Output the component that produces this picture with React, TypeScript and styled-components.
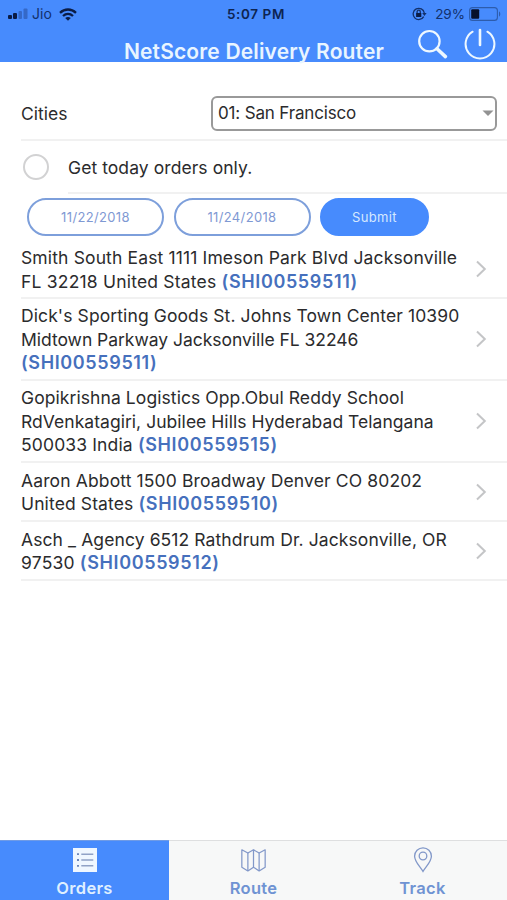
import React from "react";
import styled, { createGlobalStyle } from "styled-components";

const Global = createGlobalStyle`
  * { box-sizing: border-box; }
  body { margin: 0; background: #fff; font-family: Inter, "Liberation Sans", sans-serif; color: #2b2b2d; }
`;

const Screen = styled.div`
  width: 507px;
  height: 900px;
  display: flex;
  flex-direction: column;
  overflow: hidden;
  background: #fff;
`;

const Header = styled.header`
  height: 62px;
  flex: none;
  background: #478bfd;
  display: flex;
  flex-direction: column;
`;

const StatusBar = styled.div`
  height: 28px;
  flex: none;
  display: grid;
  grid-template-columns: 1fr auto 1fr;
  align-items: center;
  padding: 0 6px 0 8px;
  color: #12306b;
`;

const StatusSide = styled.div<{ $end?: boolean }>`
  display: flex;
  align-items: center;
  justify-content: ${(p) => (p.$end ? "flex-end" : "flex-start")};
  svg { display: block; flex: none; }
`;

const Carrier = styled.span`
  font-size: 14px;
  line-height: 16px;
  margin: 0 7px 0 4px;
`;

const Clock = styled.span`
  font-size: 13.5px;
  line-height: 16px;
  font-weight: 600;
  letter-spacing: 0.6px;
  margin-left: 3px;
  color: #0d2452;
`;

const Percent = styled.span`
  font-size: 13.5px;
  line-height: 16px;
  margin: 0 4px 0 8px;
`;

const NavBar = styled.div`
  height: 34px;
  flex: none;
  display: grid;
  grid-template-columns: 90px 1fr 90px;
`;

const Title = styled.h1`
  grid-column: 2;
  margin: 0;
  padding: 12px 0 0 1px;
  text-align: center;
  white-space: nowrap;
  font-size: 21px;
  line-height: 24px;
  font-weight: 600;
  letter-spacing: 0.16px;
  color: #e9f5ff;
`;

const NavActions = styled.div`
  display: flex;
  gap: 16.5px;
  align-items: flex-start;
  padding-left: 0.5px;
  svg { display: block; flex: none; }
`;

const CityRow = styled.div`
  margin: 33px 0 0 21px;
  height: 46px;
  flex: none;
  display: flex;
  justify-content: space-between;
  padding-right: 10px;
  border-bottom: 2px solid #f1f1f1;
`;

const Label = styled.span<{ $size?: number; $spacing?: number }>`
  font-size: ${(p) => p.$size ?? 17.5}px;
  line-height: 37px;
  letter-spacing: ${(p) => p.$spacing ?? 0}px;
`;

const CitySelect = styled.div`
  width: 286px;
  height: 35px;
  margin-top: 1px;
  border: 2px solid #999;
  border-radius: 6px;
  display: flex;
  align-items: center;
  justify-content: space-between;
  padding: 0 1px 0 5px;
`;

const TodayRow = styled.div`
  height: 53px;
  flex: none;
  display: flex;
  padding-left: 23px;
  gap: 19px;
`;

const Radio = styled.span`
  width: 26px;
  height: 26px;
  margin-top: 13px;
  border: 2px solid #d2d2d3;
  border-radius: 50%;
`;

const TodayLabel = styled.div`
  flex: 1;
  padding-top: 8px;
  border-bottom: 2px solid #f1f1f1;
`;

const Filters = styled.div`
  height: 47px;
  flex: none;
  display: flex;
  gap: 9.5px;
  padding: 4px 0 0 27px;
`;

const Pill = styled.button<{ $primary?: boolean }>`
  width: ${(p) => (p.$primary ? 109 : 137)}px;
  height: 38px;
  padding: 0;
  border: 2px solid ${(p) => (p.$primary ? "#478bfd" : "#7d9fdb")};
  border-radius: 19px;
  background: ${(p) => (p.$primary ? "#478bfd" : "#fff")};
  color: ${(p) => (p.$primary ? "#d5e8ff" : "#7f99d3")};
  font-family: inherit;
  font-size: 13px;
  letter-spacing: 0.35px;
`;

const OrderList = styled.ul`
  flex: 1;
  margin: 0;
  padding: 0 0 0 21px;
  list-style: none;
`;

const OrderRow = styled.li<{ $height: number }>`
  height: ${(p) => p.$height}px;
  border-bottom: 2px solid #f1f1f1;
  display: flex;
  align-items: center;
  justify-content: space-between;
  padding-right: 20px;
  svg { display: block; flex: none; }
`;

const Address = styled.div`
  padding-top: 1px;
  font-size: 17.5px;
  line-height: 23.4px;
`;

const Line = styled.div<{ $spacing: number }>`
  white-space: nowrap;
  letter-spacing: ${(p) => p.$spacing}px;
`;

const OrderId = styled.span`
  font-size: 18px;
  font-weight: 600;
  letter-spacing: 0.63px;
  color: #4670bd;
`;

const TabBar = styled.nav`
  height: 60px;
  flex: none;
  display: grid;
  grid-template-columns: repeat(3, 1fr);
  background: #f7f8f8;
`;

const Tab = styled.div<{ $active?: boolean }>`
  display: flex;
  flex-direction: column;
  align-items: center;
  padding-top: 7px;
  border-top: 1px solid ${(p) => (p.$active ? "#6f9be6" : "#dedfe0")};
  background: ${(p) => (p.$active ? "#478bfd" : "transparent")};
  color: ${(p) => (p.$active ? "#dfefff" : "#6f93d3")};
  svg { display: block; }
`;

const TabLabel = styled.span`
  margin-top: 6px;
  font-size: 16.5px;
  line-height: 20px;
  font-weight: 600;
  letter-spacing: 0.3px;
`;

const Signal = () => (
  <svg width="20" height="12" viewBox="0 0 20 12">
    <rect x="0" y="7" width="4" height="4" rx="1" fill="#0b1c45" />
    <rect x="5" y="5" width="4" height="6" rx="1" fill="#0b1c45" />
    <rect x="10.5" y="3" width="3.5" height="8" rx="1" fill="#3569c7" />
    <rect x="15.5" y="0.5" width="4" height="10.5" rx="1" fill="#3569c7" />
  </svg>
);

const Wifi = () => (
  <svg width="18" height="13" viewBox="0 0 18 13" fill="none" stroke="#0b1c45" strokeWidth="2.3">
    <path d="M1 4.8C5.6.4 12.4.4 17 4.8" />
    <path d="M4 8c3-2.7 7-2.7 10 0" />
    <path d="M6.2 10.1c1.7-1.5 3.9-1.5 5.6 0L9 12.7z" fill="#0b1c45" stroke="none" />
  </svg>
);

const RotationLock = () => (
  <svg width="15" height="14" viewBox="0 0 15 14" fill="none" stroke="#12306b" strokeWidth="1.3">
    <path d="M11.7 9.6A5.6 5.6 0 1 1 12.3 6" />
    <path d="M10.2 6h4.4l-2.2 3z" fill="#12306b" stroke="none" />
    <rect x="4.1" y="6" width="5.2" height="4" fill="#0b1c45" stroke="none" />
    <path d="M5.1 6V4.8a1.6 1.6 0 0 1 3.2 0V6" />
  </svg>
);

const Battery = () => (
  <svg width="32" height="14" viewBox="0 0 32 14">
    <rect x="0.6" y="0.6" width="27.8" height="12.8" rx="3" fill="none" stroke="#2d5cac" strokeWidth="1.1" />
    <path d="M30 4.5c1.7.5 1.7 4.5 0 5z" fill="#2d5cac" />
    <rect x="2.2" y="2.2" width="8" height="9.6" rx="1" fill="#07112b" />
  </svg>
);

const Search = () => (
  <svg width="30" height="31" viewBox="0 0 30 31" fill="none" stroke="#eef8ff">
    <circle cx="11.4" cy="13.2" r="10.2" strokeWidth="2.2" />
    <path d="M19 20.8l8.4 7.8" strokeWidth="3.5" strokeLinecap="round" />
  </svg>
);

const Power = () => (
  <svg width="32" height="33" viewBox="0 0 32 33" fill="none" stroke="#eef8ff" strokeWidth="2" strokeLinecap="round">
    <path d="M8.6 3.7A14.4 14.4 0 1 0 23.4 3.7" />
    <path d="M16 2v15" strokeWidth="2.6" />
  </svg>
);

const Caret = () => (
  <svg width="12" height="7" viewBox="0 0 12 7">
    <path d="M.5.5h11L6 6z" fill="#929292" />
  </svg>
);

const Chevron = () => (
  <svg width="12" height="18" viewBox="0 0 12 18" fill="none" stroke="#c4c5c7" strokeWidth="2">
    <path d="M2 1.5L9.8 9 2 16.5" />
  </svg>
);

const ListIcon = () => (
  <svg width="24" height="24" viewBox="0 0 24 24" fill="none">
    <rect width="24" height="24" fill="#eff7ff" />
    <path d="M4 6.2h2M4 12h2M4 17.8h2" stroke="#6c87bb" strokeWidth="1.8" />
    <path d="M8.3 6.2h12M8.3 12h12M8.3 17.8h12" stroke="#90a2c6" strokeWidth="1.6" />
  </svg>
);

const MapIcon = () => (
  <svg width="25" height="24" viewBox="0 0 24 24" preserveAspectRatio="none" fill="none" stroke="#8298c9" strokeWidth="1.2" strokeLinejoin="round">
    <path d="M.8 1.8L6.6 5 12 1.8 17.4 5 23.2 1.8V19.2L17.4 23 12 19.2 6.6 23 .8 19.2z" />
    <path d="M6.6 5v18M12 1.8v17.4M17.4 5v18" />
  </svg>
);

const PinIcon = () => (
  <svg width="20" height="24" viewBox="0 0 20 24" overflow="visible" fill="none" stroke="#8298c9" strokeWidth="1.3">
    <path d="M10 23.4C7 18.4 1.6 13.6 1.6 8.2a8.4 8.4 0 0 1 16.8 0c0 5.4-5.4 10.2-8.4 15.2z" />
    <circle cx="10" cy="8" r="3.8" />
  </svg>
);

type TextLine = { text: string; id?: string; spacing: number };

const orders: { height: number; lines: TextLine[] }[] = [
  {
    height: 58,
    lines: [
      { text: "Smith South East 1111 Imeson Park Blvd Jacksonville", spacing: 0.14 },
      { text: "FL 32218 United States ", id: "(SHI00559511)", spacing: 0.2 },
    ],
  },
  {
    height: 82,
    lines: [
      { text: "Dick's Sporting Goods St. Johns Town Center 10390", spacing: 0.1 },
      { text: "Midtown Parkway Jacksonville FL 32246", spacing: -0.03 },
      { text: "", id: "(SHI00559511)", spacing: 0 },
    ],
  },
  {
    height: 82,
    lines: [
      { text: "Gopikrishna Logistics Opp.Obul Reddy School", spacing: 0.08 },
      { text: "RdVenkatagiri, Jubilee Hills Hyderabad Telangana", spacing: 0.04 },
      { text: "500033 India ", id: "(SHI00559515)", spacing: 0.14 },
    ],
  },
  {
    height: 59,
    lines: [
      { text: "Aaron Abbott 1500 Broadway Denver CO 80202", spacing: 0.13 },
      { text: "United States ", id: "(SHI00559510)", spacing: 0.12 },
    ],
  },
  {
    height: 59,
    lines: [
      { text: "Asch _ Agency 6512 Rathdrum Dr. Jacksonville, OR", spacing: 0.1 },
      { text: "97530 ", id: "(SHI00559512)", spacing: 0.2 },
    ],
  },
];

export default function App() {
  return (
    <>
      <Global />
      <Screen>
        <Header>
          <StatusBar>
            <StatusSide>
              <Signal />
              <Carrier>Jio</Carrier>
              <Wifi />
            </StatusSide>
            <Clock>5:07 PM</Clock>
            <StatusSide $end>
              <RotationLock />
              <Percent>29%</Percent>
              <Battery />
            </StatusSide>
          </StatusBar>
          <NavBar>
            <Title>NetScore Delivery Router</Title>
            <NavActions>
              <Search />
              <Power />
            </NavActions>
          </NavBar>
        </Header>
        <CityRow>
          <Label>Cities</Label>
          <CitySelect>
            <Label $size={17} $spacing={-0.16}>01: San Francisco</Label>
            <Caret />
          </CitySelect>
        </CityRow>
        <TodayRow>
          <Radio />
          <TodayLabel>
            <Label $spacing={0.07}>Get today orders only.</Label>
          </TodayLabel>
        </TodayRow>
        <Filters>
          <Pill>11/22/2018</Pill>
          <Pill>11/24/2018</Pill>
          <Pill $primary>Submit</Pill>
        </Filters>
        <OrderList>
          {orders.map((order, i) => (
            <OrderRow key={i} $height={order.height}>
              <Address>
                {order.lines.map((line, j) => (
                  <Line key={j} $spacing={line.spacing}>
                    {line.text}
                    {line.id && <OrderId>{line.id}</OrderId>}
                  </Line>
                ))}
              </Address>
              <Chevron />
            </OrderRow>
          ))}
        </OrderList>
        <TabBar>
          <Tab $active>
            <ListIcon />
            <TabLabel>Orders</TabLabel>
          </Tab>
          <Tab>
            <MapIcon />
            <TabLabel>Route</TabLabel>
          </Tab>
          <Tab>
            <PinIcon />
            <TabLabel>Track</TabLabel>
          </Tab>
        </TabBar>
      </Screen>
    </>
  );
}
